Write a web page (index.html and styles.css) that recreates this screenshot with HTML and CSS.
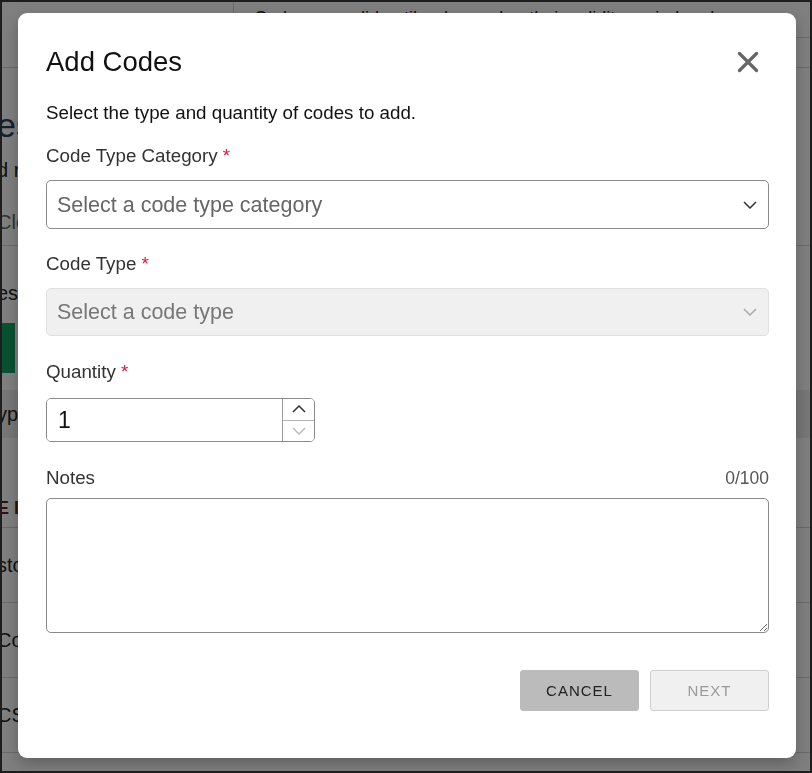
FILE: index.html
```html
<!DOCTYPE html>
<html lang="en">
<head>
    <meta charset="UTF-8">
    <meta name="viewport" content="width=device-width, initial-scale=1.0">
    <title>Add Codes</title>
    <link rel="stylesheet" href="styles.css">
</head>
<body>
    <div class="page">
        <header class="topbar">
            <div class="brand"></div>
            <div class="topbar-main">
                <div class="notice">Codes are valid until redeemed or their validity period ends.</div>
            </div>
        </header>
        <section class="intro">
            <h2 class="page-title">es Codes</h2>
            <p class="page-sub">d redeem codes</p>
            <div class="search">Clear filters</div>
        </section>
        <section class="actions">
            <p class="actions-label">es</p>
            <div class="add-btn"></div>
        </section>
        <div class="filter-row">ype</div>
        <div class="list-head">E I</div>
        <div class="list-row">stock</div>
        <div class="list-row">Code</div>
        <div class="list-row">CSV</div>
    </div>

    <div class="overlay">
        <div class="modal" role="dialog">
            <div class="modal-head">
                <h2 class="modal-title">Add Codes</h2>
                <button class="close-btn" aria-label="Close">
                    <svg width="22" height="22" viewBox="0 0 22 22"><path d="M2.5 2.5L19.5 19.5M19.5 2.5L2.5 19.5" stroke="#666" stroke-width="3.2" stroke-linecap="round"/></svg>
                </button>
            </div>
            <p class="modal-desc">Select the type and quantity of codes to add.</p>

            <div class="field">
                <label class="field-label">Code Type Category <span class="req">*</span></label>
                <div class="select-wrap">
                    <select class="select"><option>Select a code type category</option></select>
                    <svg class="chev" width="14" height="8" viewBox="0 0 14 8"><path d="M1 1l6 6 6-6" fill="none" stroke="#333" stroke-width="1.5"/></svg>
                </div>
            </div>

            <div class="field">
                <label class="field-label">Code Type <span class="req">*</span></label>
                <div class="select-wrap">
                    <select class="select" disabled><option>Select a code type</option></select>
                    <svg class="chev" width="14" height="8" viewBox="0 0 14 8"><path d="M1 1l6 6 6-6" fill="none" stroke="#aaa" stroke-width="1.5"/></svg>
                </div>
            </div>

            <div class="field field-qty">
                <label class="field-label">Quantity <span class="req">*</span></label>
                <div class="qty">
                    <input type="number" class="qty-input" value="1" min="1">
                    <div class="spin">
                        <button class="spin-btn"><svg width="14" height="8" viewBox="0 0 14 8"><path d="M1 7l6-6 6 6" fill="none" stroke="#333" stroke-width="1.5"/></svg></button>
                        <button class="spin-btn" disabled><svg width="14" height="8" viewBox="0 0 14 8"><path d="M1 1l6 6 6-6" fill="none" stroke="#bbb" stroke-width="1.5"/></svg></button>
                    </div>
                </div>
            </div>

            <div class="field field-notes">
                <div class="notes-head">
                    <label class="field-label">Notes</label>
                    <span class="count">0/100</span>
                </div>
                <textarea class="notes"></textarea>
            </div>

            <div class="modal-foot">
                <button class="btn btn-cancel">CANCEL</button>
                <button class="btn btn-next" disabled>NEXT</button>
            </div>
        </div>
    </div>
</body>
</html>
```

FILE: styles.css
```css
html {
    background-color: #1e1e1e;
}
body {
    margin: 2px;
    height: 769px;
    overflow: hidden;
    background-color: white;
    font-family: "Liberation Sans", Arial, sans-serif;
    color: #222;
}

/* page behind the dialog */
.page {
    margin-left: -5px;
}
.topbar {
    display: flex;
    height: 65px;
    border-bottom: 1px solid #d4d4d4;
}
.brand {
    width: 236px;
    border-right: 1px solid #d4d4d4;
}
.topbar-main {
    flex: 1;
}
.notice {
    height: 36px;
    border-bottom: 1px solid #d4d4d4;
    padding: 5px 0 0 20px;
    font-size: 18px;
    line-height: 22px;
    box-sizing: border-box;
}
.intro {
    height: 178px;
    border-bottom: 1px solid #d4d4d4;
    padding-top: 37px;
    box-sizing: border-box;
}
.page-title {
    margin: 0;
    font-size: 34px;
    font-weight: normal;
    color: #2a3f5f;
    line-height: 40px;
}
.page-sub {
    margin: 14px 0 0;
    font-size: 20px;
    color: #222;
}
.search {
    margin-top: 29px;
    font-size: 20px;
    color: #666;
}
.actions {
    height: 144px;
    padding-top: 36px;
    box-sizing: border-box;
}
.actions-label {
    margin: 0;
    font-size: 20px;
}
.add-btn {
    width: 18px;
    height: 50px;
    margin-top: 18px;
    background-color: #0fa463;
}
.filter-row {
    height: 48px;
    line-height: 48px;
    background-color: #eeeeee;
    font-size: 20px;
}
.list-head {
    height: 90px;
    line-height: 140px;
    box-sizing: border-box;
    border-bottom: 1px solid #d4d4d4;
    font-size: 18px;
    font-weight: bold;
    color: #6a1d1d;
    overflow: hidden;
}
.list-row {
    height: 75px;
    line-height: 74px;
    border-bottom: 1px solid #d4d4d4;
    box-sizing: border-box;
    font-size: 20px;
}

/* dialog */
.overlay {
    position: fixed;
    top: 2px;
    left: 2px;
    width: 808px;
    height: 769px;
    background-color: rgba(0, 0, 0, 0.5);
    display: flex;
    justify-content: center;
    align-items: flex-start;
    padding: 11px 0 0 2px;
    box-sizing: border-box;
}
.modal {
    width: 778px;
    background-color: white;
    border-radius: 9px;
    padding: 32px 27px 47px 28px;
    box-sizing: border-box;
    box-shadow: 0 6px 16px rgba(0, 0, 0, 0.25);
}
.modal-head {
    display: flex;
    justify-content: space-between;
    align-items: center;
    height: 34px;
}
.modal-title {
    margin: 0;
    font-size: 27.5px;
    line-height: 34px;
    font-weight: normal;
    color: #111;
}
.close-btn {
    background: none;
    border: none;
    padding: 0;
    margin-right: 10px;
    width: 22px;
    height: 22px;
    display: flex;
    cursor: pointer;
}
.modal-desc {
    margin: 23px 0 0;
    font-size: 18.75px;
    line-height: 22px;
    color: #111;
}
.field {
    margin-top: 24px;
}
.modal-desc + .field {
    margin-top: 21px;
}
.field-label {
    display: block;
    font-size: 18.75px;
    line-height: 22px;
    color: #333;
    margin-bottom: 13px;
}
.req {
    color: #e0173a;
}
.select-wrap {
    position: relative;
}
.select {
    appearance: none;
    -webkit-appearance: none;
    display: block;
    width: 100%;
    height: 49px;
    padding: 0 40px 0 10px;
    border: 1px solid #8a8a8a;
    border-radius: 5px;
    background-color: white;
    font-family: inherit;
    font-size: 21.5px;
    color: #666;
}
.select:disabled {
    height: 48px;
    background-color: #f0f0f0;
    border-color: #e0e0e0;
    color: #777;
    opacity: 1;
}
.chev {
    position: absolute;
    right: 12px;
    top: 50%;
    margin-top: -4px;
    pointer-events: none;
}
.field-qty {
    margin-top: 25px;
}
.field-qty .field-label {
    margin-bottom: 15px;
}
.qty {
    display: flex;
    width: 269px;
    height: 44px;
    border: 1px solid #8a8a8a;
    border-radius: 5px;
    box-sizing: border-box;
    overflow: hidden;
}
.qty-input {
    flex: 1;
    min-width: 0;
    border: none;
    outline: none;
    padding: 0 0 0 11px;
    font-family: inherit;
    font-size: 23px;
    color: #111;
    -moz-appearance: textfield;
}
.qty-input::-webkit-outer-spin-button,
.qty-input::-webkit-inner-spin-button {
    -webkit-appearance: none;
    margin: 0;
}
.spin {
    width: 31px;
    display: flex;
    flex-direction: column;
    border-left: 1px solid #9a9a9a;
}
.spin-btn {
    flex: 1;
    border: none;
    background: white;
    padding: 0 0 0 1px;
    display: flex;
    align-items: center;
    justify-content: center;
}
.spin-btn + .spin-btn {
    border-top: 1px solid #b5b5b5;
}
.field-notes {
    margin-top: 25px;
}
.notes-head {
    display: flex;
    justify-content: space-between;
    align-items: baseline;
    margin-bottom: 9px;
}
.notes-head .field-label {
    margin-bottom: 0;
}
.count {
    font-size: 17.5px;
    color: #555;
}
.notes {
    display: block;
    width: 100%;
    height: 135px;
    box-sizing: border-box;
    border: 1px solid #8a8a8a;
    border-radius: 5px;
    font-family: inherit;
    font-size: 18px;
    padding: 8px 11px;
    resize: both;
}
.modal-foot {
    display: flex;
    justify-content: flex-end;
    gap: 11px;
    margin-top: 37px;
}
.btn {
    width: 119px;
    height: 41px;
    border-radius: 3px;
    font-family: inherit;
    font-size: 15px;
    letter-spacing: 1px;
    cursor: pointer;
}
.btn-cancel {
    background-color: #bbbbbb;
    border: 1px solid #bbbbbb;
    color: #222;
}
.btn-next {
    background-color: #f0f0f0;
    border: 1px solid #cfcfcf;
    color: #999;
}
```
